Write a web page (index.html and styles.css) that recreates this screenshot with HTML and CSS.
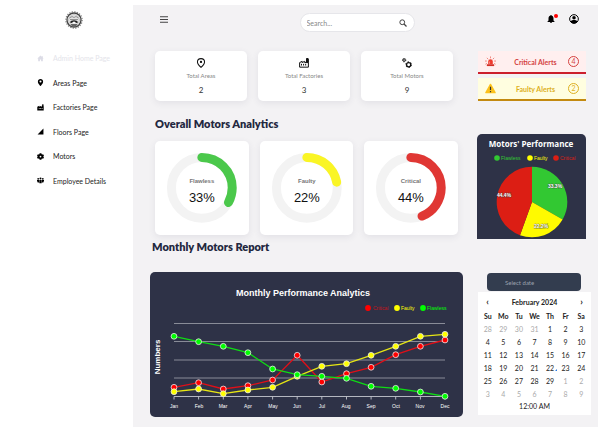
FILE: index.html
```html
<!DOCTYPE html>
<html lang="en">
<head>
<meta charset="utf-8">
<meta name="viewport" content="width=device-width, initial-scale=1">
<title>Motors Dashboard</title>
<link rel="stylesheet" href="styles.css">
</head>
<body>
<aside class="sidebar">
  <a class="logo" href="#" aria-label="Home">
    <svg viewBox="0 0 36 36" width="18" height="18">
      <circle cx="18" cy="18" r="16.3" fill="none" stroke="#8a8a8a" stroke-width="2.6" stroke-dasharray="2.6 2.52"/>
      <circle cx="18" cy="18" r="14" fill="#fff" stroke="#444" stroke-width="2.6"/>
      <circle cx="18" cy="18" r="11" fill="#e2e2e2" stroke="#999" stroke-width="1"/>
      <path d="M9 14l5-3 4 2 4-2 5 3M10 17h16" fill="none" stroke="#777" stroke-width="1.5"/>
      <path d="M10 23c1-6 15-6 16 0l-3 1c-2-3-8-3-10 0z" fill="#222"/>
      <path d="M11 26h14l-3 5h-8z" fill="#666"/>
      <circle cx="18" cy="23" r="2" fill="#fff"/>
    </svg>
  </a>
  <nav class="menu">
    <a class="menu-item active" href="#"><svg class="icon" viewBox="0 0 24 24"><path d="M12 2 1 12h3v9h6v-6h4v6h6v-9h3l-3-2.7V4h-4v2z"/></svg>Admin Home Page</a>
    <a class="menu-item" href="#"><svg class="icon" viewBox="0 0 24 24"><path fill-rule="evenodd" d="M12 0C6.500 0 3 4 3 9c0 6 9 15 9 15s9-9 9-15c0-5-3.500-9-9-9zm0 5a3.500 3.500 0 1 1 0 7 3.500 3.500 0 0 1 0-7z"/></svg>Areas Page</a>
    <a class="menu-item" href="#"><svg class="icon" viewBox="0 0 24 24"><path fill-rule="evenodd" d="M1 22V9l7-3v3l7-3v3h2l1-8h4l1 8v13zM6 14v2h3v-2zm5 0v2h3v-2zm5 0v2h3v-2z"/></svg>Factories Page</a>
    <a class="menu-item" href="#"><svg class="icon" viewBox="0 0 24 24"><path d="M2 22 22 2v20z"/></svg>Floors Page</a>
    <a class="menu-item" href="#"><svg class="icon" viewBox="0 0 24 24"><path fill-rule="evenodd" d="M9 1h6l1 3 2 1 3-1 3 5-2 2v2l2 2-3 5-3-1-2 1-1 3H9l-1-3-2-1-3 1-3-5 2-2v-2L0 9l3-5 3 1 2-1zm3 8a3 3 0 1 0 0 6 3 3 0 0 0 0-6z"/></svg>Motors</a>
    <a class="menu-item" href="#"><svg class="icon" viewBox="0 0 24 24"><circle cx="4" cy="6" r="3"/><circle cx="12" cy="5" r="3.500"/><circle cx="20" cy="6" r="3"/><path d="M0 10h7v9H2v-4H0zM8 10h8v11H8zM17 10h7v5h-2v4h-5z"/></svg>Employee Details</a>
  </nav>
</aside>

<main class="page">
  <header class="topbar">
    <button class="icon-button burger" type="button" aria-label="Toggle menu"><svg viewBox="0 0 16 14" width="8" height="7"><path d="M0 1.500h16M0 7h16M0 12.500h16" stroke="#444" stroke-width="2"/></svg></button>
    <form class="search">
      <input type="search" aria-label="Search" placeholder="Search...">
      <button class="icon-button" type="submit" aria-label="Submit search"><svg viewBox="0 0 16 16" width="8" height="8"><circle cx="6.500" cy="6.500" r="4.800" fill="none" stroke="#444" stroke-width="2"/><path d="m10 10 5 5" stroke="#444" stroke-width="2.600"/></svg></button>
    </form>
    <div class="account">
      <button class="icon-button bell" type="button" aria-label="Notifications"><svg viewBox="0 0 16 16" width="8" height="8"><path d="M8 0a1.500 1.500 0 0 0-1.500 1.700C4 2.300 3 4.500 3 7v4l-2 2v1h14v-1l-2-2V7c0-2.500-1-4.700-3.500-5.300A1.500 1.500 0 0 0 8 0zM6 14.500h4a2 2 0 0 1-4 0z"/></svg><span class="dot"></span></button>
      <button class="icon-button" type="button" aria-label="Account"><svg viewBox="0 0 20 20" width="10" height="10"><circle cx="10" cy="10" r="8.700" fill="none" stroke="#000" stroke-width="2"/><circle cx="10" cy="7.500" r="3.500"/><path d="M3 15c2-4 12-4 14 0-3 5-11 5-14 0z"/></svg></button>
    </div>
  </header>

  <div class="content">
    <section class="stats" aria-label="Totals">
      <article class="card stat">
        <svg viewBox="0 0 24 24" width="10" height="10" fill="none" stroke="#111" stroke-width="2.500"><path d="M12 22.500S3.500 15 3.500 9.500a8.500 8 0 0 1 17 0c0 5.500-8.500 13-8.500 13z"/><circle cx="12" cy="9.500" r="1.500" fill="#111"/></svg>
        <span class="stat-label">Total Areas</span><span class="stat-value">2</span>
      </article>
      <article class="card stat">
        <svg viewBox="0 0 24 24" width="10" height="10" fill="none" stroke="#111" stroke-width="2.400"><path d="M1.500 22V11l6-3v3l6-3v3h4l1-10h3l1 10v11z"/><path d="M18 2h4v9h-4z" fill="#111"/><path d="M6 14v4m5-4v4m5-4v4"/></svg>
        <span class="stat-label">Total Factories</span><span class="stat-value">3</span>
      </article>
      <article class="card stat">
        <svg viewBox="0 0 24 24" width="10" height="10" fill="none" stroke="#111"><circle cx="5" cy="5" r="3" stroke-width="2.400"/><circle cx="5" cy="5" r="4.500" stroke-width="1.500" stroke-dasharray="1.800 1.700"/><circle cx="16" cy="16" r="5" stroke-width="3"/><circle cx="16" cy="16" r="7" stroke-width="2" stroke-dasharray="3.700 3.630"/></svg>
        <span class="stat-label">Total Motors</span><span class="stat-value">9</span>
      </article>
    </section>

    <section class="alerts" aria-label="Alerts">
      <a class="alert critical" href="#">
        <svg viewBox="0 0 24 24" width="11" height="11"><path d="M7 18v-6a5 5 0 0 1 10 0v6z" fill="#ef3a2d"/><path d="M4 18h16v4H4z" fill="#d22f27"/><path d="M12 1v4M4 4l3 3M20 4l-3 3M0 11h4M20 11h4M1 18l3-2M23 18l-3-2" stroke="#e8665a" stroke-width="1.600"/><path d="M10 12v5" stroke="#ffb3a8" stroke-width="1.500"/></svg>
        <span>Critical Alerts</span><span class="badge">4</span>
      </a>
      <a class="alert faulty" href="#">
        <svg viewBox="0 0 24 24" width="11" height="11"><path d="M12 3 2 21h20z" fill="#fcc21b" stroke="#fcc21b" stroke-width="3" stroke-linejoin="round"/><path d="M12 8v7M12 17.500v2.500" stroke="#333" stroke-width="2.600"/></svg>
        <span>Faulty Alerts</span><span class="badge">2</span>
      </a>
    </section>

    <section class="analytics">
      <h2>Overall Motors Analytics</h2>
      <div class="rings">
        <article class="card"><svg class="ring" viewBox="0 0 94 94">
          <circle class="track" cx="47" cy="47" r="30.500"/>
          <circle class="arc" cx="47" cy="47" r="30.500" pathLength="100" stroke="#4bc84b" stroke-dasharray="33 67" transform="rotate(-90 47 47)"/>
          <text class="ring-label" x="47" y="42">Flawless</text><text class="ring-value" x="47" y="61">33%</text></svg></article>
        <article class="card"><svg class="ring" viewBox="0 0 94 94">
          <circle class="track" cx="47" cy="47" r="30.500"/>
          <circle class="arc" cx="47" cy="47" r="30.500" pathLength="100" stroke="#faf525" stroke-dasharray="22 78" transform="rotate(-90 47 47)"/>
          <text class="ring-label" x="47" y="42">Faulty</text><text class="ring-value" x="47" y="61">22%</text></svg></article>
        <article class="card"><svg class="ring" viewBox="0 0 94 94">
          <circle class="track" cx="47" cy="47" r="30.500"/>
          <circle class="arc" cx="47" cy="47" r="30.500" pathLength="100" stroke="#e03734" stroke-dasharray="44 56" transform="rotate(-90 47 47)"/>
          <text class="ring-label" x="47" y="42">Critical</text><text class="ring-value" x="47" y="61">44%</text></svg></article>
      </div>
    </section>

    <section class="panel pie">
      <svg viewBox="0 0 109 105">
        <text class="pie-title" x="54" y="13">Motors' Performance</text>
        <g class="legend">
          <circle cx="20" cy="24" r="2.800" fill="#32c832"/><text x="24" y="26" fill="#32c832">Flawless</text>
          <circle cx="53" cy="24" r="2.800" fill="#ffff00"/><text x="57" y="26" fill="#ffff00">Faulty</text>
          <circle cx="79" cy="24" r="2.800" fill="#dc1e14"/><text x="83" y="26" fill="#dc1e14">Critical</text>
        </g>
        <g transform="translate(55 68)">
          <path d="M0 0V-35.300A35.300 35.300 0 0 1 30.600 17.600z" fill="#32c832"/>
          <path d="M0 0 30.600 17.600A35.300 35.300 0 0 1-12 33.200z" fill="#fffa00"/>
          <path d="M0 0-12 33.200A35.300 35.300 0 0 1 0-35.300z" fill="#dc1e14"/>
        </g>
        <g class="pie-values"><text x="78" y="54">33.3%</text><text x="64" y="94">22.2%</text><text x="27" y="63">44.4%</text></g>
      </svg>
    </section>

    <section class="report">
      <h2>Monthly Motors Report</h2>
      <div class="panel line">
        <svg viewBox="0 0 313 145">
          <defs>
            <marker id="red" viewBox="-4 -4 8 8" markerWidth="8" markerHeight="8" markerUnits="userSpaceOnUse"><circle r="2.900" fill="#f00" stroke="#eee" stroke-width=".8"/></marker>
            <marker id="yellow" viewBox="-4 -4 8 8" markerWidth="8" markerHeight="8" markerUnits="userSpaceOnUse"><circle r="2.900" fill="#ff0" stroke="#eee" stroke-width=".8"/></marker>
            <marker id="green" viewBox="-4 -4 8 8" markerWidth="8" markerHeight="8" markerUnits="userSpaceOnUse"><circle r="2.900" fill="#0f0" stroke="#eee" stroke-width=".8"/></marker>
          </defs>
          <text class="line-title" x="153" y="24">Monthly Performance Analytics</text>
          <g class="legend">
            <circle cx="218" cy="36" r="2.900" fill="#f00"/><text x="223" y="38" fill="#c4141c">Critical</text>
            <circle cx="247" cy="36" r="2.900" fill="#ff0"/><text x="251" y="38" fill="#ff0">Faulty</text>
            <circle cx="273" cy="36" r="2.900" fill="#0f0"/><text x="277" y="38" fill="#0f0">Flawless</text>
          </g>
          <path d="M24 51.500H295M24 69.500H295M24 88H295M24 106H295" stroke="#9496a2" stroke-width=".9"/>
          <path d="M24 124.500H295M24 124.500v3M48.600 124.500v3M73.300 124.500v3M97.900 124.500v3M122.600 124.500v3M147.200 124.500v3M171.800 124.500v3M196.500 124.500v3M221.100 124.500v3M245.700 124.500v3M270.400 124.500v3M295 124.500v3" stroke="#c4c6ce" stroke-width=".9" fill="none"/>
          <polyline class="series critical-series" points="24,115.300 48.600,110.700 73.300,117 97.900,113.700 122.600,108 147.200,83.300 171.800,110 196.500,101.700 221.100,95.300 245.700,82.700 270.400,74.300 295,68"/>
          <polyline class="series faulty-series" points="24,119.700 48.600,117 73.300,121.700 97.900,118 122.600,115.300 147.200,104.300 171.800,94.300 196.500,91.700 221.100,83.300 245.700,74.300 270.400,64.300 295,62.300"/>
          <polyline class="series flawless-series" points="24,64.300 48.600,69.700 73.300,74.300 97.900,80.700 122.600,97 147.200,102.700 171.800,104.300 196.500,106.300 221.100,114.300 245.700,116.300 270.400,120 295,124.300"/>
          <text class="axis-title" transform="translate(10 85) rotate(-90)">Numbers</text>
          <g class="months"><text x="24" y="136">Jan</text><text x="49" y="136">Feb</text><text x="73" y="136">Mar</text><text x="98" y="136">Apr</text><text x="123" y="136">May</text><text x="147" y="136">Jun</text><text x="172" y="136">Jul</text><text x="196" y="136">Aug</text><text x="221" y="136">Sep</text><text x="246" y="136">Oct</text><text x="270" y="136">Nov</text><text x="295" y="136">Dec</text></g>
        </svg>
      </div>
    </section>

    <section class="picker">
      <input class="date" type="text" aria-label="Select date" placeholder="Select date">
      <div class="calendar">
        <div class="month"><button type="button" aria-label="Previous month">‹</button><strong>February 2024</strong><button type="button" aria-label="Next month">›</button></div>
        <table>
          <thead><tr><th>Su</th><th>Mo</th><th>Tu</th><th>We</th><th>Th</th><th>Fr</th><th>Sa</th></tr></thead>
          <tbody>
            <tr><td class="out">28</td><td class="out">29</td><td class="out">30</td><td class="out">31</td><td>1</td><td>2</td><td>3</td></tr>
            <tr><td>4</td><td>5</td><td>6</td><td>7</td><td>8</td><td>9</td><td>10</td></tr>
            <tr><td>11</td><td>12</td><td>13</td><td>14</td><td>15</td><td>16</td><td>17</td></tr>
            <tr><td>18</td><td>19</td><td>20</td><td>21</td><td class="today">22</td><td>23</td><td>24</td></tr>
            <tr><td>25</td><td>26</td><td>27</td><td>28</td><td>29</td><td class="out">1</td><td class="out">2</td></tr>
            <tr><td class="out">3</td><td class="out">4</td><td class="out">5</td><td class="out">6</td><td class="out">7</td><td class="out">8</td><td class="out">9</td></tr>
          </tbody>
        </table>
        <button class="time" type="button">12:00 AM</button>
      </div>
    </section>
  </div>
</main>
</body>
</html>
```
FILE: styles.css
```css
* { box-sizing: border-box; }

body {
  margin: 0;
  min-height: 100vh;
  padding: 5px 4px 11px 0;
  display: grid;
  grid-template-columns: 133px 1fr;
  background: #fff;
  color: #222;
  font: 7px/10px Lato, sans-serif;
}

button, input { font: inherit; color: inherit; border: 0; background: none; padding: 0; margin: 0; }
a { color: inherit; text-decoration: none; }
svg { display: block; }
h2 { margin: 0; font-size: 11px; line-height: 14px; font-weight: 800; color: #23283f; }

.sidebar { display: flex; flex-direction: column; gap: 17px; padding-top: 6px; }
.logo { align-self: center; padding-left: 15px; }
.menu { display: grid; grid-auto-rows: 1fr; height: 147px; }
.menu-item { display: flex; align-items: center; gap: 9px; padding-left: 37px; color: #222; }
.menu-item.active { color: #e4e4ea; }
.icon { width: 7px; height: 7px; fill: #000; }
.active .icon { fill: #dcdce6; }

.page { background: #f3f2f4; padding: 8px 7px 10px 17px; }

.topbar { display: grid; grid-template-columns: 4fr 115px 5fr; align-items: start; padding: 0 2px 0 10px; margin-bottom: 19px; }
.icon-button { display: block; line-height: 0; }
.burger { justify-self: start; padding-top: 3px; }
.search { display: flex; align-items: center; height: 19px; padding: 0 7px 0 6px; border: 1px solid #e6e6ea; border-radius: 10px; background: #fff; }
.search input { flex: 1; min-width: 0; outline: 0; }
.search input::placeholder { color: #888; }
.account { display: flex; align-items: center; justify-content: flex-end; gap: 14px; height: 12px; padding-right: 10px; }
.bell { position: relative; }
.dot { position: absolute; top: -1px; right: -3px; width: 4px; height: 4px; border-radius: 50%; background: #f00; }

.content { display: grid; grid-template-columns: 1fr 114px; column-gap: 14px; }
.card { background: #fff; border-radius: 5px; box-shadow: 0 2px 7px rgba(60, 60, 90, .09); }
.stats { display: grid; grid-template-columns: repeat(3, 1fr); gap: 11px; padding: 0 10px 0 5px; }
.stat { display: flex; flex-direction: column; align-items: center; height: 50px; padding-top: 7px; }
.stat-label { margin-top: 3px; font-size: 6px; color: #888; }
.stat-value { margin-top: 4px; font-size: 8px; color: #333; }

.alerts { display: grid; gap: 4px; padding: 0 5px 0 1px; height: 50px; }
.alert { display: grid; grid-template-columns: 18px 1fr 11px; align-items: center; padding: 0 7px; text-align: center; font-weight: 700; }
.critical { color: #d4423f; background: #ffefef; border-bottom: 2px solid #cc1f2d; }
.faulty { color: #ddb022; background: #fffee0; border-bottom: 2px solid #c38a10; }
.badge { width: 11px; height: 11px; border: 1px solid; border-radius: 50%; line-height: 9px; font-weight: 400; }

.analytics { padding: 16px 5px 0; }
.rings { display: grid; grid-template-columns: repeat(3, 1fr); gap: 11px; margin-top: 10px; }
.ring { width: 100%; font-family: "Liberation Sans", sans-serif; text-anchor: middle; }
.track, .arc { fill: none; stroke-width: 9; }
.track { stroke: #f3f3f3; }
.arc { stroke-linecap: round; }
.ring-label { font-size: 6px; font-weight: 700; fill: #777; }
.ring-value { font-size: 13px; fill: #111; }

.panel { background: #2e3247; border-radius: 5px; font-family: "Liberation Sans", sans-serif; }
.panel svg { width: 100%; }
.pie { margin: 33px 5px 0 0; border-radius: 5px 5px 0 0; align-self: start; }
.pie-title { font: 700 8px "Open Sans", sans-serif; fill: #fff; text-anchor: middle; }
.legend { font-size: 5px; }
.pie-values { font-size: 5px; font-weight: 700; fill: #fff; stroke: rgba(60, 60, 60, .6); stroke-width: 1; paint-order: stroke; text-anchor: middle; }

.report { padding-top: 1px; }
.report h2 { padding-left: 2px; }
.line { margin-top: 18px; }
.line-title { font-size: 9px; font-weight: 700; fill: #fff; text-anchor: middle; }
.axis-title { font-size: 8px; font-weight: 700; fill: #fff; text-anchor: middle; }
.months { font-size: 5px; fill: #fff; text-anchor: middle; }
.series { fill: none; stroke-width: 1.3; }
.critical-series { stroke: #e00f18; marker: url(#red); }
.faulty-series { stroke: #e6e614; marker: url(#yellow); }
.flawless-series { stroke: #0fdc14; marker: url(#green); }

.picker { padding: 34px 0 0 1px; }
.date { display: block; width: calc(100% - 19px); height: 18px; margin-left: 9px; padding: 0 18px; border-radius: 4px; background: #333d4f; color: #fff; font-size: 6px; }
.date::placeholder { color: #9aa1ae; }
.calendar { margin-top: 1px; padding: 2px 2px 3px; background: #fff; color: #222; }
.month { display: grid; grid-template-columns: 15px 1fr 15px; height: 15px; align-items: center; text-align: center; }
.month button { font-size: 9px; font-weight: 700; }
table { width: 100%; table-layout: fixed; border-collapse: collapse; text-align: center; }
th, td { padding: 0; height: 13px; line-height: 12px; }
.out { color: #aaa; }
.today { position: relative; }
.today::after { content: ""; position: absolute; right: 1px; bottom: 3px; border: 1px solid #2c7be5; border-top-color: transparent; border-left-color: transparent; }
.time { display: block; width: 100%; height: 12px; }
```
